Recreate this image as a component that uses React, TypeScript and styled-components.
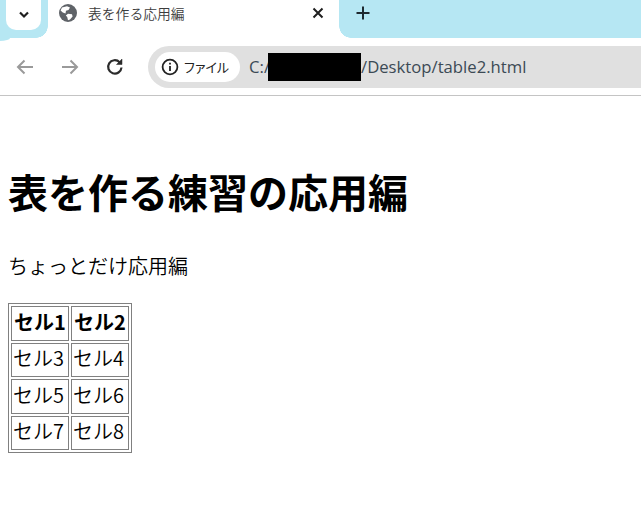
import * as React from 'react'
import styled, { createGlobalStyle } from 'styled-components';

const GlobalStyle = createGlobalStyle`
    html, body {
        margin: 0;
        padding: 0;
        background: #fff;
        overflow: hidden;
    }
    body {
        font-family: "Noto Sans CJK JP", "Liberation Sans", sans-serif;
        color: #000;
    }
`;

const Window = styled.div`
    width: 641px;
    height: 508px;
    overflow: hidden;
`;

const TabStrip = styled.div`
    position: relative;
    display: flex;
    align-items: flex-start;
    height: 38px;
    background: #b6e7f3;
    padding-left: 6px;

    &::after {
        content: '';
        position: absolute;
        left: 0;
        top: 38px;
        width: 10px;
        height: 3px;
        background: #b6e7f3;
        border-radius: 0 0 100% 0;
    }
`;

const TabSearch = styled.div`
    position: relative;
    z-index: 1;
    display: flex;
    align-items: center;
    justify-content: center;
    width: 35px;
    height: 30px;
    background: #fff;
    border-radius: 0 0 10px 10px;
    color: #1f1f1f;
`;

const Tab = styled.div`
    position: relative;
    display: flex;
    align-items: center;
    width: 291px;
    height: 38px;
    margin-left: 7px;
    padding: 0 15px 12px 11px;
    box-sizing: border-box;
    background: #fff;

    &::before, &::after {
        content: '';
        position: absolute;
        bottom: 0;
        width: 12px;
        height: 12px;
    }
    &::before {
        left: -12px;
        background: radial-gradient(circle at 0 0, #b6e7f3 11.5px, #fff 12px);
    }
    &::after {
        right: -12px;
        background: radial-gradient(circle at 100% 0, #b6e7f3 11.5px, #fff 12px);
    }
`;

const TabTitle = styled.span`
    flex: 1;
    margin-left: 11px;
    font-size: 13.8px;
    line-height: 16px;
    font-weight: 350;
    color: #3c3c3c;
`;

const NewTab = styled.div`
    display: flex;
    width: 16px;
    height: 16px;
    margin: 5px 0 0 16px;
    color: #1f2a30;
`;

const Toolbar = styled.div`
    display: flex;
    align-items: center;
    height: 57px;
    padding-left: 15px;
    background: #fff;
    border-bottom: 1px solid #c4c4c4;
`;

const NavButton = styled.div<{ $off?: boolean }>`
    display: flex;
    width: 20px;
    height: 20px;
    margin-right: 25px;
    color: ${p => (p.$off ? '#9a9a9a' : '#2b2b2b')};
`;

const AddressBar = styled.div`
    display: flex;
    flex: 1;
    align-items: center;
    height: 42px;
    margin-left: -2px;
    padding-left: 7px;
    background: #e0e0e0;
    border-radius: 21px 0 0 21px;
`;

const SecurityChip = styled.div`
    display: flex;
    align-items: center;
    width: 85px;
    height: 30px;
    padding-left: 6px;
    box-sizing: border-box;
    background: #fff;
    border-radius: 15px;
    font-size: 13px;
    font-feature-settings: "palt";
    color: #222;
`;

const ChipLabel = styled.span`
    margin-left: 5px;
`;

const Url = styled.div`
    display: flex;
    align-items: center;
    margin-left: 9px;
    font-family: "Open Sans", "Liberation Sans", sans-serif;
    font-size: 16.7px;
    color: #3c4a55;
`;

const Redacted = styled.span`
    display: inline-block;
    width: 93px;
    height: 28px;
    margin-left: -2px;
    background: #000;
`;

const Page = styled.main`
    padding: 8px;
`;

const Heading = styled.h1`
    margin: 58px 0 0;
    font-size: 40px;
    line-height: 58px;
    font-weight: 700;
`;

const Lead = styled.p`
    margin: 31px 0 22px;
    font-size: 20px;
    line-height: 30px;
    font-weight: 350;
`;

const Grid = styled.table`
    border: 1px solid #808080;
    border-collapse: separate;
    border-spacing: 2px;
`;

const HeadCell = styled.th`
    height: 34.5px;
    box-sizing: border-box;
    min-width: 58px;
    padding: 0 1px 3px;
    border: 1px solid #808080;
    font-size: 20px;
    line-height: 28px;
    font-weight: 700;
    text-align: center;
`;

const Cell = styled.td`
    height: 34.5px;
    box-sizing: border-box;
    min-width: 58px;
    padding: 0 1px 3px;
    border: 1px solid #808080;
    font-size: 20px;
    line-height: 28px;
    font-weight: 350;
`;

const rows = [
    ['セル3', 'セル4'],
    ['セル5', 'セル6'],
    ['セル7', 'セル8'],
];

const Globe = () => (
    <svg width="18" height="18" viewBox="0 0 18 18">
        <circle cx="9" cy="9" r="9" fill="#5f6368" />
        <path d="M3 3.5 L8 2.2 L11 3.5 L9.5 6 L7 6.8 L6.5 9.5 L3.8 8.5 L1.6 6.5 Z" fill="#fff" />
        <path d="M9 9.8 L13 10.3 L13.6 12.4 L11 15.6 L9 16.3 L8.2 13 L6.8 11.5 Z" fill="#fff" />
    </svg>
);

const App: React.FunctionComponent = () => (
    <Window>
        <GlobalStyle />
        <TabStrip>
            <TabSearch>
                <svg width="12" height="8" viewBox="0 0 12 8" fill="none" stroke="currentColor" strokeWidth="2.2">
                    <path d="M2 1.5 L6 5.5 L10 1.5" />
                </svg>
            </TabSearch>
            <Tab>
                <Globe />
                <TabTitle>表を作る応用編</TabTitle>
                <svg width="12" height="12" viewBox="0 0 12 12" stroke="#1f1f1f" strokeWidth="2">
                    <path d="M1.5 1.5 L10.5 10.5 M10.5 1.5 L1.5 10.5" />
                </svg>
            </Tab>
            <NewTab>
                <svg width="16" height="16" viewBox="0 0 16 16" stroke="currentColor" strokeWidth="2">
                    <path d="M8 1.5 V14.5 M1.5 8 H14.5" />
                </svg>
            </NewTab>
        </TabStrip>
        <Toolbar>
            <NavButton $off>
                <svg width="20" height="20" viewBox="0 0 20 20" fill="none" stroke="currentColor" strokeWidth="2">
                    <path d="M18 10 H3 M9.5 3.5 L3 10 L9.5 16.5" />
                </svg>
            </NavButton>
            <NavButton $off>
                <svg width="20" height="20" viewBox="0 0 20 20" fill="none" stroke="currentColor" strokeWidth="2">
                    <path d="M2 10 H17 M10.5 3.5 L17 10 L10.5 16.5" />
                </svg>
            </NavButton>
            <NavButton>
                <svg width="20" height="20" viewBox="0 0 20 20" fill="none" stroke="currentColor" strokeWidth="2.2">
                    <path d="M16.5 10.5 A6.7 6.7 0 1 1 14.6 5.2" />
                    <path d="M17 2 V7.5 H11.5 Z" fill="currentColor" strokeWidth="0.5" />
                </svg>
            </NavButton>
            <AddressBar>
                <SecurityChip>
                    <svg width="18" height="18" viewBox="0 0 18 18" fill="none" stroke="currentColor" strokeWidth="1.8">
                        <circle cx="9" cy="9" r="7.4" />
                        <path d="M9 8 V13 M9 4.8 V6.6" />
                    </svg>
                    <ChipLabel>ファイル</ChipLabel>
                </SecurityChip>
                <Url>
                    C:/<Redacted />/Desktop/table2.html
                </Url>
            </AddressBar>
        </Toolbar>
        <Page>
            <Heading>表を作る練習の応用編</Heading>
            <Lead>ちょっとだけ応用編</Lead>
            <Grid>
                <thead>
                    <tr>
                        <HeadCell>セル1</HeadCell>
                        <HeadCell>セル2</HeadCell>
                    </tr>
                </thead>
                <tbody>
                    {rows.map((row, index) => (
                        <tr key={index}>
                            {row.map(text => (
                                <Cell key={text}>{text}</Cell>
                            ))}
                        </tr>
                    ))}
                </tbody>
            </Grid>
        </Page>
    </Window>
);

export default App;
